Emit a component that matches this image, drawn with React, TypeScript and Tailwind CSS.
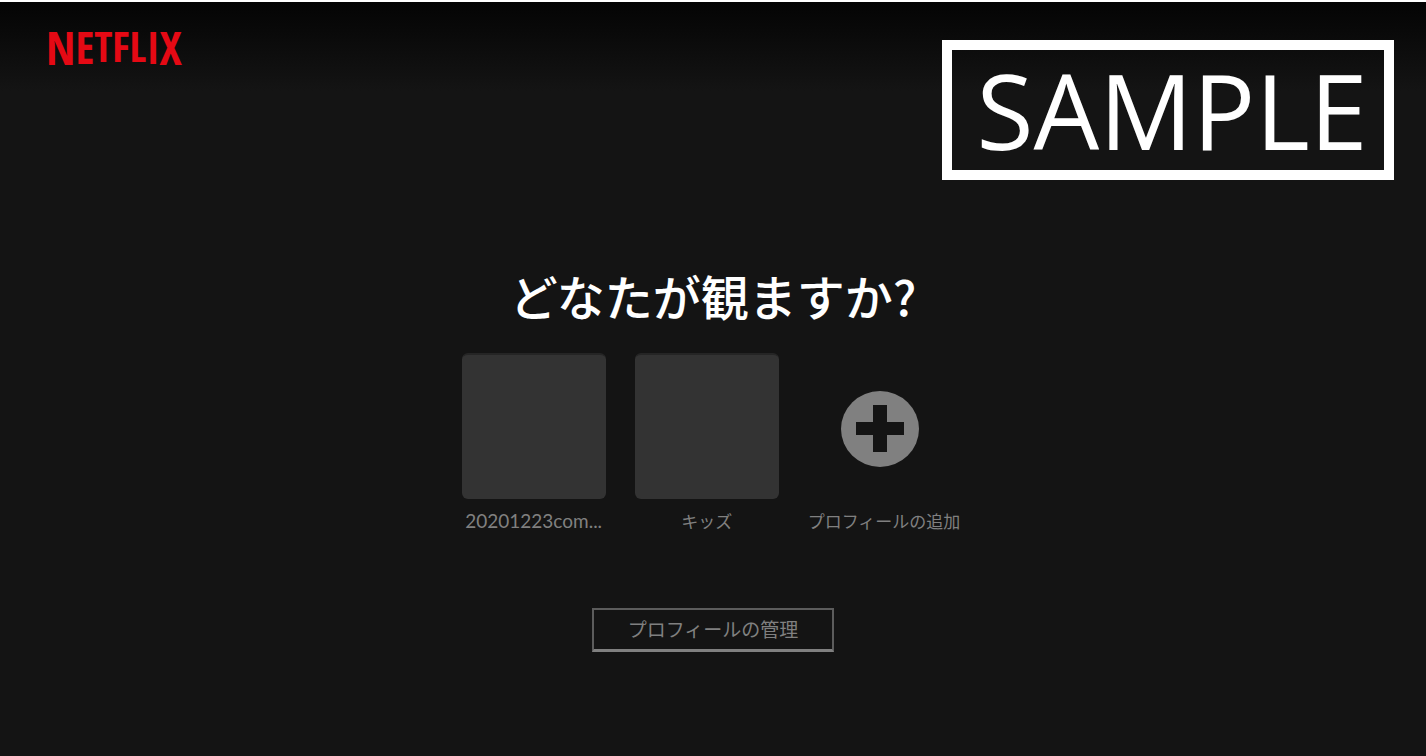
interface Profile {
  id: string;
  name: string;
  latin?: boolean;
}

const profiles: Profile[] = [
  { id: "main", name: "20201223com...", latin: true },
  { id: "kids", name: "キッズ" },
];

function Logo() {
  return (
    <svg width="144" height="64" viewBox="0 0 144 64" role="img" aria-label="NETFLIX">
      {/* Letters get shorter towards the middle, sharing one top edge */}
      <text
        y="49"
        fontWeight="700"
        fontFamily="'Open Sans Condensed', 'Open Sans', sans-serif"
        fill="#e50914"
      >
        <tspan fontSize="47">N</tspan>
        <tspan dy="-1" fontSize="44">E</tspan>
        <tspan dy="-2" fontSize="42">T</tspan>
        <tspan fontSize="42">F</tspan>
        <tspan fontSize="42">L</tspan>
        <tspan dy="2" fontSize="44">I</tspan>
        <tspan dy="1" fontSize="47">X</tspan>
      </text>
    </svg>
  );
}

function PlusIcon() {
  return (
    <svg width="80" height="78" viewBox="0 0 80 78" aria-hidden="true">
      <ellipse cx="40" cy="39" rx="39" ry="38" fill="#808080" />
      <path d="M33 15h14v17h17v13H47v17H33V45H16V32h17z" fill="#141414" />
    </svg>
  );
}

export default function App() {
  return (
    <div className="min-h-screen border-t-2 border-white bg-[#141414] font-['Noto_Sans_CJK_JP',sans-serif] text-[#808080]">
      {/* Header */}
      <header className="flex items-start justify-between bg-linear-to-b/srgb from-[#040404] to-[#141414] to-50% pl-[46px] pr-8">
        <a href="#" className="mt-3.5 block">
          <Logo />
        </a>
        <div className="mt-[38px] flex h-[140px] w-[452px] items-center justify-center border-10 border-white pl-2 font-['Open_Sans',sans-serif] text-[104px] leading-none text-white">
          SAMPLE
        </div>
      </header>

      {/* Profile picker */}
      <main className="flex flex-col items-center pt-[83px]">
        <h1 className="text-5xl leading-16 font-medium text-white">どなたが観ますか?</h1>

        <ul className="mt-[26px] flex gap-[29px] pr-1">
          {profiles.map((profile) => (
            <li key={profile.id}>
              <a href="#" className="flex w-36 flex-col items-center">
                <span className="h-[146px] w-full rounded-md border-t-2 border-[#252525] bg-[#333333]" />
                <span
                  className={
                    profile.latin
                      ? "mt-2.5 font-['Lato',sans-serif] text-[19px] leading-6"
                      : "mt-2.5 text-[17px] leading-6"
                  }
                >
                  {profile.name}
                </span>
              </a>
            </li>
          ))}
          <li>
            <button type="button" className="flex flex-col">
              <span className="flex h-[146px] w-36 items-center justify-center pt-1.5">
                <PlusIcon />
              </span>
              <span className="mt-2.5 text-[17px] leading-6">プロフィールの追加</span>
            </button>
          </li>
        </ul>

        <button
          type="button"
          className="mt-[75px] border-2 border-b-3 border-[#5c5c5c] border-b-[#808080] px-[34px] pt-[5px] pb-1.5 text-[19px] leading-7"
        >
          プロフィールの管理
        </button>
      </main>
    </div>
  );
}
